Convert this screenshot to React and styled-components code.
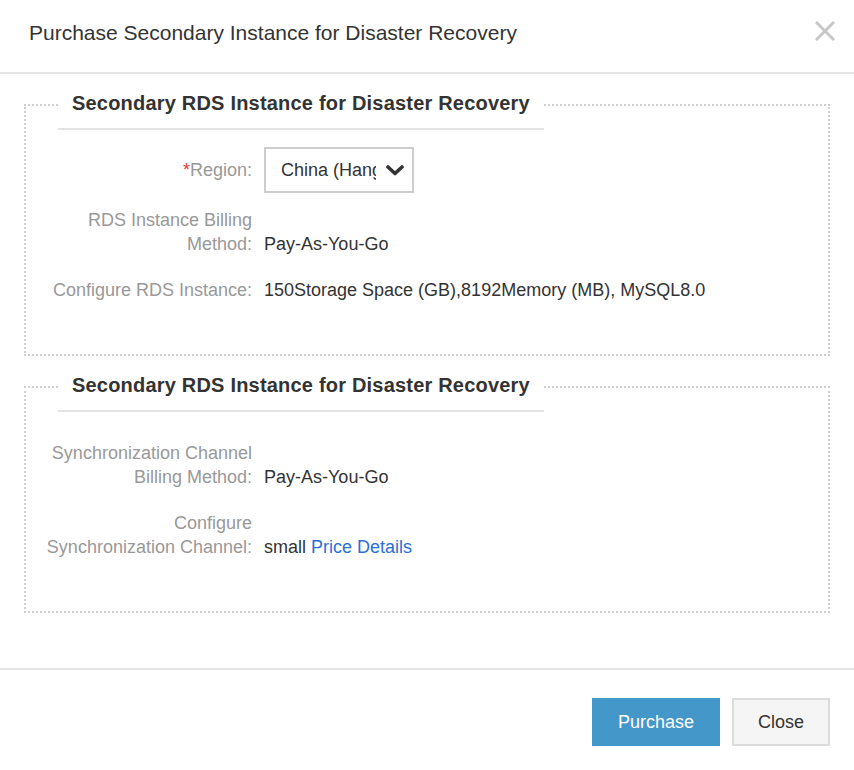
import React from "react";
import styled, { createGlobalStyle } from "styled-components";

const Global = createGlobalStyle`
  html, body { margin: 0; padding: 0; background: #fff; }
  body { font-family: "Liberation Sans", Arial, sans-serif; color: #333; }
  * { box-sizing: border-box; }
`;

const Dialog = styled.div`
  width: 854px;
  height: 770px;
  display: flex;
  flex-direction: column;
  background: #fff;
`;

const Header = styled.div`
  height: 74px;
  display: flex;
  align-items: center;
  justify-content: space-between;
  padding: 0 19px 6px 29px;
  border-bottom: 2px solid #e5e5e5;
`;

const Title = styled.h1`
  margin: 0;
  font-size: 21px;
  font-weight: 400;
  line-height: 30px;
  color: #333;
`;

const CloseIcon = styled.button`
  width: 20px;
  height: 20px;
  padding: 0;
  margin-top: -4px;
  border: 0;
  background: none;
  display: flex;
  cursor: pointer;
`;

const Body = styled.div`
  flex: 1;
  padding: 5px 24px 0;
  display: flex;
  flex-direction: column;
  gap: 5px;
`;

const Fieldset = styled.fieldset`
  margin: 0;
  min-width: 0;
  border: 2px dotted #cfcfcf;
  padding: ${(p) => p.$top}px 16px 52px;
`;

const Legend = styled.legend`
  margin-left: 16px;
  padding: 0 14px;
  line-height: 49px;
  font-size: 20px;
  font-weight: 700;
  letter-spacing: 0.2px;
  color: #333;
  border-bottom: 2px solid #e3e3e3;
`;

const Row = styled.div`
  display: flex;
  align-items: ${(p) => (p.$center ? "center" : "flex-end")};
  gap: 12px;
  margin-top: ${(p) => p.$mt || 0}px;
  font-size: 18px;
  line-height: 24px;
`;

const Label = styled.div`
  width: 210px;
  flex: none;
  text-align: right;
  color: #999;
`;

const Required = styled.span`
  color: #e4393c;
`;

const Value = styled.div`
  color: #333;
  white-space: nowrap;
`;

const Link = styled.a`
  color: #2b6fd6;
  text-decoration: none;
  cursor: pointer;
`;

const Select = styled.div`
  width: 150px;
  height: 46px;
  border: 2px solid #cdcdcd;
  display: flex;
  align-items: center;
  padding: 0 8px 0 15px;
  gap: 10px;
  background: #fff;
`;

const SelectText = styled.span`
  flex: 1;
  overflow: hidden;
  white-space: nowrap;
  color: #333;
`;

const Footer = styled.div`
  border-top: 2px solid #e5e5e5;
  display: flex;
  justify-content: flex-end;
  gap: 12px;
  padding: 28px 24px 24px;
`;

const Button = styled.button`
  height: 48px;
  padding: 0 24px;
  font-family: "Liberation Sans", Arial, sans-serif;
  font-size: 18px;
  border: 2px solid ${(p) => (p.$primary ? "#4497c9" : "#dcdcdc")};
  background: ${(p) => (p.$primary ? "#4497c9" : "#f5f5f5")};
  color: ${(p) => (p.$primary ? "#fff" : "#333")};
  cursor: pointer;
`;

const Chevron = () => (
  <svg width="18" height="11" viewBox="0 0 18 11">
    <polyline
      points="2,2 9,8.5 16,2"
      fill="none"
      stroke="#333"
      strokeWidth="3.6"
      strokeLinecap="round"
      strokeLinejoin="round"
    />
  </svg>
);

const XIcon = () => (
  <svg width="20" height="20" viewBox="0 0 20 20">
    <path d="M2 2 L18 18 M18 2 L2 18" stroke="#c8c8c8" strokeWidth="3" strokeLinecap="square" />
  </svg>
);

export default function App() {
  return (
    <>
      <Global />
      <Dialog>
        <Header>
          <Title>Purchase Secondary Instance for Disaster Recovery</Title>
          <CloseIcon aria-label="close">
            <XIcon />
          </CloseIcon>
        </Header>
        <Body>
          <Fieldset $top={17}>
            <Legend>Secondary RDS Instance for Disaster Recovery</Legend>
            <Row $center>
              <Label>
                <Required>*</Required>Region:
              </Label>
              <Select>
                <SelectText>China (Hangzhou)</SelectText>
                <Chevron />
              </Select>
            </Row>
            <Row $mt={15}>
              <Label>RDS Instance Billing Method:</Label>
              <Value>Pay-As-You-Go</Value>
            </Row>
            <Row $mt={22}>
              <Label>Configure RDS Instance:</Label>
              <Value>150Storage Space (GB),8192Memory (MB), MySQL8.0</Value>
            </Row>
          </Fieldset>
          <Fieldset $top={29}>
            <Legend>Secondary RDS Instance for Disaster Recovery</Legend>
            <Row>
              <Label>Synchronization Channel Billing Method:</Label>
              <Value>Pay-As-You-Go</Value>
            </Row>
            <Row $mt={22}>
              <Label>Configure Synchronization Channel:</Label>
              <Value>
                small <Link>Price Details</Link>
              </Value>
            </Row>
          </Fieldset>
        </Body>
        <Footer>
          <Button $primary>Purchase</Button>
          <Button>Close</Button>
        </Footer>
      </Dialog>
    </>
  );
}
